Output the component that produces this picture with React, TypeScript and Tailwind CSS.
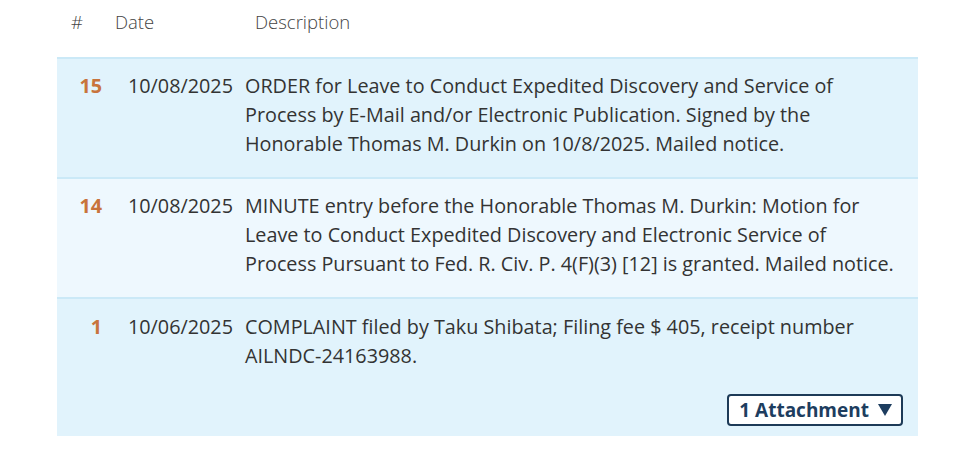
import React from "react";

const rows = [
  {
    n: "15",
    date: "10/08/2025",
    lines: [
      "ORDER for Leave to Conduct Expedited Discovery and Service of",
      "Process by E-Mail and/or Electronic Publication. Signed by the",
      "Honorable Thomas M. Durkin on 10/8/2025. Mailed notice.",
    ],
    bg: "bg-[#e1f3fc]",
  },
  {
    n: "14",
    date: "10/08/2025",
    lines: [
      "MINUTE entry before the Honorable Thomas M. Durkin: Motion for",
      "Leave to Conduct Expedited Discovery and Electronic Service of",
      "Process Pursuant to Fed. R. Civ. P. 4(F)(3) [12] is granted. Mailed notice.",
    ],
    bg: "bg-[#eef8fe]",
  },
];

export default function App() {
  return (
    <div
      className="w-[954px] h-[460px] bg-white overflow-hidden"
      style={{ fontFamily: '"Open Sans", "Noto Sans", sans-serif' }}
    >
      <div className="ml-[57px] w-[861px]">
        <div className="h-[57px] flex items-start pt-[8px] text-[18.5px] text-[#444] font-light">
          <div className="w-[58px] pl-[14px]">#</div>
          <div className="w-[140px]">Date</div>
          <div>Description</div>
        </div>
        {rows.map((r) => (
          <div
            key={r.n}
            className={`${r.bg} border-t-2 border-[#cbe9f7] h-[120px] flex pt-[12px] text-[19.8px] leading-[29px] text-[#333]`}
          >
            <div className="w-[45px] text-right font-bold text-[#c8743c]">{r.n}</div>
            <div className="w-[143px] pl-[26px] whitespace-nowrap">{r.date}</div>
            <div className="flex-1 pl-[0px]">
              {r.lines.map((l, i) => (
                <div key={i} className="whitespace-nowrap">{l}</div>
              ))}
            </div>
          </div>
        ))}
        <div className="bg-[#e1f3fc] border-t-2 border-[#cbe9f7] h-[139px] flex flex-col pt-[13px] text-[19.8px] leading-[29px] text-[#333]">
          <div className="flex">
            <div className="w-[45px] text-right font-bold text-[#c8743c]">1</div>
            <div className="w-[143px] pl-[26px] whitespace-nowrap">10/06/2025</div>
            <div className="flex-1">
              <div className="whitespace-nowrap">
                COMPLAINT filed by Taku Shibata; Filing fee $ 405, receipt number
              </div>
              <div>AILNDC-24163988.</div>
            </div>
          </div>
          <div className="flex justify-end pr-[15px] mt-[24px]">
            <button className="h-[32px] pl-[10px] pr-[8px] border-2 border-[#1d3a57] rounded-[4px] bg-white text-[#1d3d5f] font-bold text-[19px] leading-none flex items-center gap-[8px]">
              <span>1 Attachment</span>
              <svg width="16" height="14" viewBox="0 0 16 14">
                <path d="M1 1 H15 L8 13 Z" fill="#1d3d5f" />
              </svg>
            </button>
          </div>
        </div>
      </div>
    </div>
  );
}
